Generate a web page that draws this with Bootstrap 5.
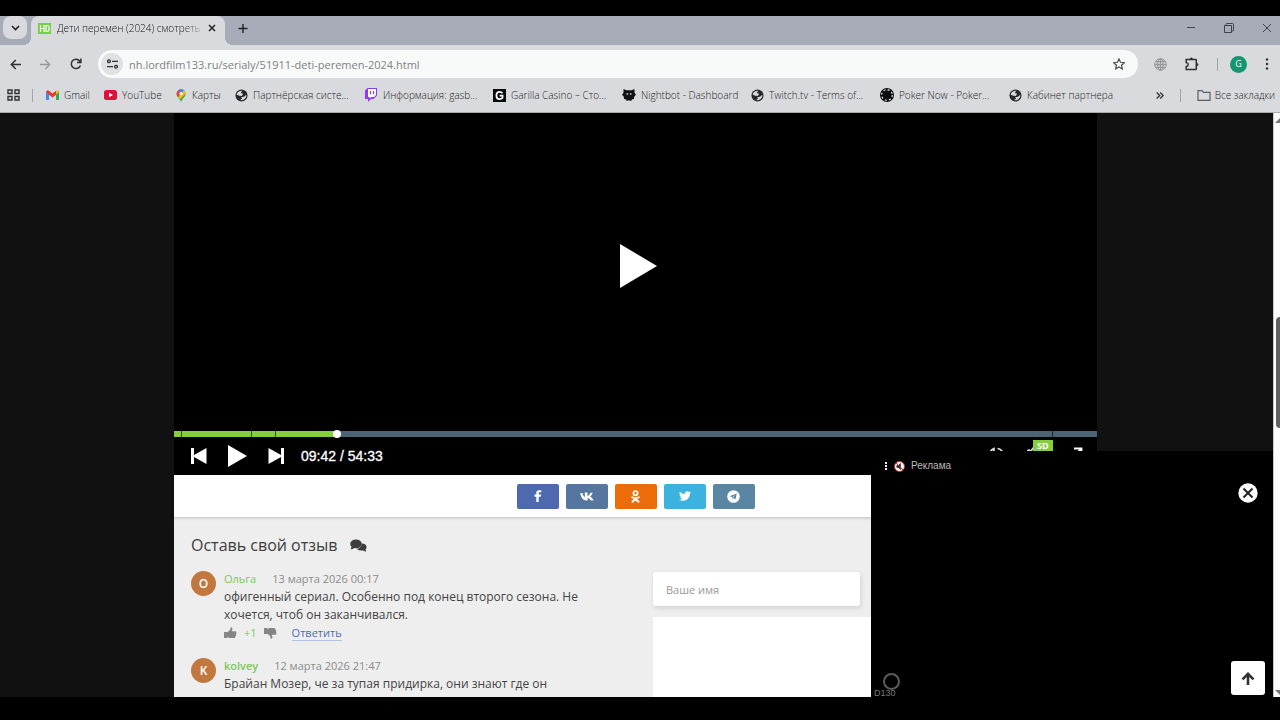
<!DOCTYPE html>
<html lang="ru">
<head>
<meta charset="utf-8">
<meta name="viewport" content="width=device-width, initial-scale=1">
<title>Дети перемен (2024) смотреть</title>
<link href="https://cdn.jsdelivr.net/npm/bootstrap@5.3.0/dist/css/bootstrap.min.css" rel="stylesheet">
<style>
  :root { --chrome: #d9dade; --strip: #a8abb8; --ink: #2f3136; --green: #84cf3b; }
  body { background: #000; font-family: "Open Sans", "Noto Sans", sans-serif; font-size: 13px; line-height: 18px; color: #444; }
  button { border: 0; background: none; padding: 0; color: inherit; font: inherit; display: inline-flex; align-items: center; justify-content: center; }
  svg { display: block; flex: none; }
  a { color: inherit; text-decoration: none; }
  .screen { height: 100vh; padding: 16px 0 23px; }

  .tabstrip { background: var(--strip); height: 29px; color: #222; }
  .tab-search { width: 24px; height: 23px; margin: 0 3px; border-radius: 8px; background: var(--chrome); }
  .tab-active { width: 194px; height: 29px; margin-left: 1px; padding: 0 9px 5px 7px; border-radius: 8px 8px 0 0; background: var(--chrome); position: relative; }
  .tab-active::before, .tab-active::after { content: ""; position: absolute; bottom: 0; width: 8px; height: 8px; }
  .tab-active::before { left: -8px; background: radial-gradient(circle at 0 0, transparent 8px, var(--chrome) 8px); }
  .tab-active::after { right: -8px; background: radial-gradient(circle at 100% 0, transparent 8px, var(--chrome) 8px); }
  .tab-title { font-size: 10px; font-weight: 300; color: #111317; margin-left: 6px; white-space: nowrap; -webkit-mask-image: linear-gradient(90deg, #000 88%, #0004); mask-image: linear-gradient(90deg, #000 88%, #0004); }
  .window-btns { color: #3f414c; gap: 28px; padding-right: 8px; height: 23px; }

  .toolbar { background: var(--chrome); height: 38px; padding: 0 11px 0 10px; color: var(--ink); }
  .nav-btns { gap: 19px; }
  .tool-btns { gap: 18px; padding-left: 16px; }
  .profile-group { gap: 12px; }
  .omnibox { background: #f8f9f9; height: 28px; border-radius: 14px; margin-left: 16px; padding: 0 13px 0 3px; }
  .site-info { width: 22px; height: 22px; border-radius: 50%; background: #dfe1e3; }
  .omnibox input { border: 0; outline: 0; background: none; padding: 1px 0 0 6px; font-size: 11px; color: #7f8286; min-width: 0; }
  .profile { width: 17px; height: 17px; border-radius: 50%; background: #159570; color: #fff; font-size: 9px; }
  .rule { width: 1px; height: 13px; background: #a2a4aa; }

  .bookmarks { background: var(--chrome); height: 30px; padding: 0 5px 5px 7px; font-size: 10px; font-weight: 300; color: #1d1f24; border-bottom: 1px solid #a9aaad; white-space: nowrap; }
  .bookmark-list { display: grid; grid-template-columns: 58px 71px 60px repeat(7, 129px); margin-left: 13px; }
  .bookmark-list a { display: flex; align-items: center; gap: 5px; min-width: 0; }

  .page-view { background: #111; }
  .page-main { padding-right: 2px; }
  .site { max-width: 923px; }
  .player { background: #000; height: 362px; }
  .big-play { padding: 0 0 12px 6px; }
  .seek { height: 6px; background: #4c6373; }
  .seek-done { height: 6px; background: var(--green); position: relative; }
  .seek-knob { position: absolute; right: -4px; top: -1px; width: 8px; height: 8px; border-radius: 50%; background: #fff; }
  .seek-mark { position: absolute; top: 0; width: 1px; height: 6px; background: #2d5212; }
  .controls { height: 38px; padding: 0 12px 0 16px; color: #fff; font-family: "Liberation Sans", Arial, sans-serif; font-size: 14px; -webkit-text-stroke: .3px #fff; }
  .skip-btns { gap: 21px; }
  .view-btns { gap: 23px; }
  .quality { position: relative; }
  .sd { position: absolute; left: 6px; top: -7px; background: var(--green); color: #fff; font: 700 9px/12px "Open Sans", sans-serif; padding: 0 4px; -webkit-text-stroke: 0; }

  .share { background: #fff; height: 42px; gap: 7px; box-shadow: 0 1px 3px #0003; position: relative; }
  .share button { width: 42px; height: 25px; border-radius: 2px; color: #fff; }
  .reviews { background: #eee; padding: 16px 17px; }
  .reviews h2 { font-size: 16px; line-height: 24px; color: #3d3d3d; font-weight: 500; margin: 0 0 13px; gap: 13px; }
  .review-grid { display: grid; grid-template-columns: 390px 1fr; column-gap: 72px; }
  .review { gap: 8px; margin-bottom: 15px; }
  .review p { font-size: 12px; }
  .review-meta { font-size: 11px; color: #8b8b8b; gap: 16px; }
  .votes { gap: 7px; }
  .avatar-disc { width: 25px; height: 25px; border-radius: 50%; background: #c1773d; color: #fff; font-size: 12px; font-weight: 600; margin-top: 1px; flex: none; }
  .author { color: #7cc95a; font-weight: 500; }
  .reply { color: #4a6cb8; border-bottom: 1px solid #b4c2e2; line-height: 15px; margin-left: 8px; }
  .field-name { width: calc(50% - 7px); height: 34px; border: 0; border-radius: 3px; background: #fff; box-shadow: 1px 2px 5px #0000001f; padding: 0 13px; font-size: 11px; margin-top: 2px; }
  .field-name::placeholder { color: #999; opacity: 1; }
  .field-text { border: 0; background: #fff; height: 160px; margin-top: 11px; resize: none; }

  .ad { position: absolute; right: 0; bottom: 0; width: 402px; height: 246px; background: #000; color: #bbb; font: 10px/14px "Liberation Sans", Arial, sans-serif; }
  .ad-head { padding: 8px 0 0 13px; gap: 6px; }
  .ad-close { position: absolute; right: 15px; top: 32px; }
  .ad-ring { position: absolute; left: 12px; bottom: 7px; width: 17px; height: 17px; border: 2px solid #5c5c5c; border-radius: 50%; }
  .ad-code { position: absolute; left: 3px; bottom: -3px; color: #777; font-size: 9px; }
  .to-top { position: absolute; right: 8px; bottom: 2px; width: 34px; height: 34px; border-radius: 3px; background: #fff; color: #333; }
  .scroll-rail { width: 7px; background: #fcfcfc; position: relative; overflow: hidden; border-left: 1px solid #c9c9c9; }
  .scroll-thumb { position: absolute; left: 2px; top: 35%; height: 19%; width: 10px; border-radius: 4px; background: #606060; }
  .rail-up, .rail-down { position: absolute; left: 1px; border: 5px solid transparent; }
  .rail-up { top: 0; border-bottom-color: #777; }
  .rail-down { bottom: -3px; border-top-color: #777; }
</style>
</head>
<body>
<svg width="0" height="0" class="position-absolute" aria-hidden="true">
  <symbol id="globe" viewBox="0 0 14 14"><circle cx="7" cy="7" r="6.500" fill="#26282c"/><path d="M1.800 6.300C2.300 3.600 4.500 1.900 7.800 2L6.200 4.200 8.800 5.200 7.300 7.500 4.800 7.200zM6.500 8.900l3.200-.6L12.200 6.300c.4 2.900-1.600 5.400-4.700 5.800L5.500 11.500l2.300-1.200z" fill="#d9dade"/></symbol>
  <symbol id="thumb" viewBox="0 0 14 13"><path d="M0 5.500h3.200V12H0zM3.200 6l3.400-2.700L7.200.3C8.800 0 9.400 1.400 8.900 3l-.6 1.700h3.900c1.400 0 1.600 1.300.9 1.900.6.600.4 1.500-.3 1.800.4.700.1 1.400-.5 1.600.2 1.100-.3 2-1.600 2H7.200C5.800 12 5 11.300 3.200 11.200z" fill="#858585"/></symbol>
</svg>
<div class="screen d-flex flex-column overflow-hidden">
  <header>
    <div class="tabstrip d-flex align-items-start">
      <button class="tab-search" aria-label="Поиск вкладок"><svg width="9" height="6" viewBox="0 0 9 6"><path d="M1 1l3.500 3.500L8 1" fill="none" stroke="currentColor" stroke-width="1.600"/></svg></button>
      <div class="tab-active d-flex align-items-center">
        <svg width="13" height="11" viewBox="0 0 13 11"><path d="M0 0h13v11H0z" fill="#74d044"/><path d="M2.500 2v7M6 2v7M2.500 5.500H6M8 2.500v6h1q2.200 0 2.200-3t-2.200-3z" fill="none" stroke="#fff" stroke-width="1.200"/></svg>
        <span class="tab-title">Дети перемен (2024) смотреть</span>
        <button class="ms-auto" aria-label="Закрыть вкладку"><svg width="8" height="8" viewBox="0 0 8 8"><path d="M1 1l6 6M7 1L1 7" stroke="#222" stroke-width="1.500"/></svg></button>
      </div>
      <button class="ms-2 ps-1 pt-2" aria-label="Новая вкладка"><svg width="11" height="9" viewBox="0 0 11 9"><path d="M6 0v9M1.500 4.500h9" stroke="currentColor" stroke-width="1.400"/></svg></button>
      <div class="window-btns d-flex align-items-center ms-auto">
        <button aria-label="Свернуть"><svg width="10" height="10" viewBox="0 0 10 10"><path d="M1 4.500h8" stroke="currentColor"/></svg></button>
        <button aria-label="Развернуть"><svg width="10" height="10" viewBox="0 0 10 10"><path d="M.5 2.500h7v7h-7zM2 2.500v-1q0-1 1-1h5.500q1 0 1 1V7q0 1-1 1h-1" fill="none" stroke="currentColor"/></svg></button>
        <button aria-label="Закрыть"><svg width="10" height="10" viewBox="0 0 10 10"><path d="M1 1l8 8M9 1L1 9" stroke="currentColor"/></svg></button>
      </div>
    </div>

    <div class="toolbar d-flex align-items-center">
      <div class="nav-btns d-flex">
        <button aria-label="Назад"><svg width="11" height="11" viewBox="0 0 11 11"><path d="M11 5.500H1.500M5.800 1L1.300 5.500 5.800 10" fill="none" stroke="currentColor" stroke-width="1.500"/></svg></button>
        <button aria-label="Вперёд"><svg width="11" height="11" viewBox="0 0 11 11"><path d="M0 5.500h9.500M5.200 1l4.500 4.500L5.200 10" fill="none" stroke="#96989d" stroke-width="1.400"/></svg></button>
        <button aria-label="Обновить"><svg width="12" height="12" viewBox="0 0 12 12"><path d="M10.400 7.500A4.700 4.700 0 1 1 9.700 3L10.700 4.300M10.900.5v4H7" fill="none" stroke="currentColor" stroke-width="1.500"/></svg></button>
      </div>
      <div class="omnibox d-flex align-items-center flex-grow-1">
        <button class="site-info" aria-label="Сведения о сайте"><svg width="11" height="10" viewBox="0 0 11 10"><g fill="none" stroke="#333" stroke-width="1.300"><circle cx="2" cy="2.300" r="1.400"/><path d="M5 2.300h6M0 7.700h6"/><circle cx="9" cy="7.700" r="1.400"/></g></svg></button>
        <input class="flex-grow-1" type="text" aria-label="Адрес" value="nh.lordfilm133.ru/serialy/51911-deti-peremen-2024.html">
        <button aria-label="Добавить в закладки"><svg width="12" height="12" viewBox="0 0 12 12"><path d="M6 .9l1.500 3.400 3.800.4-2.800 2.500.8 3.700L6 9l-3.300 1.900.8-3.700L.7 4.700l3.800-.4z" fill="none" stroke="#4a4c50" stroke-width="1.200"/></svg></button>
      </div>
      <div class="tool-btns d-flex align-items-center">
        <button aria-label="Язык"><svg width="13" height="13" viewBox="0 0 13 13"><g fill="#c8c9cb" stroke="#97999c"><circle cx="6.500" cy="6.500" r="5.800"/><ellipse cx="6.500" cy="6.500" rx="2.700" ry="5.800"/><path d="M6.500.7v11.600M.7 6.500h11.600M1.600 3.500h9.800M1.600 9.500h9.800"/></g></svg></button>
        <button aria-label="Расширения"><svg width="14" height="14" viewBox="0 0 14 14"><path d="M1.200 2.500h9.600q.5 0 .5.500v9q0 .5-.5.500H1.200V9.600q2-.3 2-2.100t-2-2.100z" fill="none" stroke="currentColor" stroke-width="1.500"/><path d="M4.700 2a1.600 1.600 0 0 1 3.200 0zM11.800 5.900a1.600 1.600 0 0 1 0 3.200z" fill="currentColor"/></svg></button>
        <div class="profile-group d-flex align-items-center"><span class="rule"></span>
        <button class="profile" aria-label="Профиль">G</button></div>
        <button aria-label="Меню"><svg width="4" height="12" viewBox="0 0 4 12"><g fill="currentColor"><circle cx="2" cy="1.500" r="1.200"/><circle cx="2" cy="6" r="1.200"/><circle cx="2" cy="10.500" r="1.200"/></g></svg></button>
      </div>
    </div>

    <nav class="bookmarks d-flex align-items-center">
      <button class="me-1" aria-label="Приложения"><svg width="13" height="12" viewBox="0 0 13 12"><path d="M1 1h4v3.500H1zM8 1h4v3.500H8zM1 7.500h4V11H1zM8 7.500h4V11H8z" fill="none" stroke="#2f3136" stroke-width="1.400"/></svg></button>
      <span class="rule ms-2"></span>
      <div class="bookmark-list">
        <a href="#"><svg width="13" height="10" viewBox="0 0 13 10"><path d="M0 1.500V10h3V4z" fill="#4285f4"/><path d="M13 1.500V10h-3V4z" fill="#34a853"/><path d="M0 1.800Q1-.5 3 .7l3.500 2.800L10 .7v4L6.500 7.500 3 4.700z" fill="#e33b2e"/><path d="M10 .7q2-1.200 3 1.100L10 4.700z" fill="#fbbc04"/></svg><span>Gmail</span></a>
        <a href="#"><svg width="13" height="10" viewBox="0 0 13 10"><rect width="13" height="10" rx="2.500" fill="#e0103c"/><path d="M5 2.800v4.400L9 5z" fill="#fff"/></svg><span>YouTube</span></a>
        <a href="#"><svg width="12" height="13" viewBox="0 0 12 13"><path d="M6 13C5.500 10 1.500 8 1.500 4.500L9.300 1.500C12 5 10 7.500 8 9.500Q6.600 11 6 13" fill="#34a853"/><path d="M1.500 4.800Q1.500 2 3.700.7L7 3.500 3 8.200Q1.500 6.300 1.500 4.800" fill="#e94335"/><path d="M3.500.8Q6.500-.9 9.300 1.500L6 4.500z" fill="#4285f4"/><path d="M3 8.200l6-6.900Q10.600 2.800 10.500 4.700L5.200 10.200z" fill="#fbbc04"/><circle cx="6" cy="4.500" r="1.600" fill="#fff"/></svg><span>Карты</span></a>
        <a href="#"><svg width="13" height="13"><use href="#globe"/></svg><span>Партнёрская систе...</span></a>
        <a href="#"><svg width="14" height="14" viewBox="0 0 14 14"><path d="M3.500 0H13v7.500L9.500 11H7l-3 3v-3H1V2.500z" fill="#8c3df2"/><path d="M4 1h8v6L10 9H7.500L5.700 10.800V9H4z" fill="#fff"/><path d="M6.500 3v3.200M9.500 3v3.200" stroke="#8c3df2" stroke-width="1.200"/></svg><span>Информация: gasb...</span></a>
        <a href="#"><svg width="13" height="13" viewBox="0 0 13 13"><path d="M0 0h13v13H0z" fill="#08090d"/><path d="M9.500 4.200Q8.500 2.900 6.500 2.900 3.400 2.900 3.400 6.500t3.200 3.600Q8.500 10.100 9.500 9V6.700H6.600" fill="none" stroke="#fff" stroke-width="1.800"/></svg><span>Garilla Casino – Сто...</span></a>
        <a href="#"><svg width="14" height="14" viewBox="0 0 14 14"><path d="M1.500 1l3 1.200h5l3-1.200v3.500L14 7l-1.500 1-.7 3-2 .5-.5 1.500-2.300-.7-2.300.7-.5-1.500-2-.5-.7-3L0 7l1.500-2.500z" fill="#111216"/><path d="M4.500 5h1.600v2H4.700zM7.900 5h1.600l-.2 2H7.900z" fill="#a5a6ab"/></svg><span>Nightbot - Dashboard</span></a>
        <a href="#"><svg width="13" height="13"><use href="#globe"/></svg><span>Twitch.tv - Terms of...</span></a>
        <a href="#"><svg width="14" height="14" viewBox="0 0 14 14"><circle cx="7" cy="7" r="7" fill="#0c0c0e"/><circle cx="7" cy="7" r="5.300" fill="none" stroke="#d5d6da" stroke-width="1.300" stroke-dasharray="2 2.160"/><circle cx="7" cy="7" r="4.200" fill="#0c0c0e"/></svg><span>Poker Now - Poker...</span></a>
        <a href="#"><svg width="13" height="13"><use href="#globe"/></svg><span>Кабинет партнера</span></a>
      </div>
      <div class="d-flex align-items-center ms-auto gap-3">
        <button aria-label="Ещё закладки"><svg width="8" height="7" viewBox="0 0 8 7"><path d="M.7.500l3 3-3 3M4.200.5l3 3-3 3" fill="none" stroke="#2f3136" stroke-width="1.300"/></svg></button>
        <span class="rule"></span>
        <a href="#" class="d-flex align-items-center gap-1"><svg width="14" height="11" viewBox="0 0 14 11"><path d="M1 .7h4l1.500 1.600H13v8H1z" fill="none" stroke="#5c5e63" stroke-width="1.200"/></svg>Все закладки</a>
      </div>
    </nav>
  </header>

  <div class="page-view d-flex flex-grow-1 overflow-hidden">
    <main class="page-main flex-grow-1 position-relative overflow-hidden">
      <div class="site mx-auto">
        <section class="player d-flex flex-column">
          <button class="big-play flex-grow-1 w-100" aria-label="Смотреть"><svg width="37" height="44" viewBox="0 0 37 44"><path d="M0 0v44l37-22z" fill="#fff"/></svg></button>
          <div class="seek position-relative">
            <div class="seek-done" style="width:17.700%"><span class="seek-mark" style="left:4.500%"></span><span class="seek-mark" style="left:47%"></span><span class="seek-mark" style="left:62%"></span><span class="seek-knob"></span></div>
            <span class="seek-mark bg-dark" style="left:95.100%"></span>
          </div>
          <div class="controls d-flex align-items-center">
            <div class="skip-btns d-flex align-items-center">
              <button aria-label="Предыдущая"><svg width="17" height="16" viewBox="0 0 17 16"><path d="M1 0h3v7L16.500 0v16L4 9v7H1z" fill="#fff"/></svg></button>
              <button aria-label="Играть"><svg width="19" height="22" viewBox="0 0 19 22"><path d="M0 0v22l19-11z" fill="#fff"/></svg></button>
              <button aria-label="Следующая"><svg width="17" height="16" viewBox="0 0 17 16"><path d="M16 0h-3v7L.5 0v16L13 9v7h3z" fill="#fff"/></svg></button>
            </div>
            <span class="ms-3">09:42 / 54:33</span>
            <div class="view-btns d-flex align-items-center ms-auto">
              <button aria-label="Скорость"><svg width="16" height="18" viewBox="0 0 16 18"><path d="M2 6Q3 2.500 6 1.500V5M9.500 1.500Q13.500 2 15 6" fill="none" stroke="#ddd" stroke-width="1.700"/></svg></button>
              <button class="quality" aria-label="Качество"><svg width="20" height="18" viewBox="0 0 20 18"><path d="M0 4l2-1 1.500 1.500L7 0" fill="none" stroke="#ddd" stroke-width="1.700"/></svg><span class="sd">SD</span></button>
              <button aria-label="На весь экран"><svg width="15" height="18" viewBox="0 0 15 18"><path d="M4 1.500h7.500V9M11 2L4 9" fill="none" stroke="#fff" stroke-width="1.800"/></svg></button>
            </div>
          </div>
        </section>

        <div class="share d-flex align-items-center justify-content-center">
          <button style="background:#4e69ad" aria-label="Facebook"><svg width="8" height="12" viewBox="0 0 8 12"><path d="M2.300 12V6.700H.5V4.500h1.800V3Q2.300.3 5 .2h2.300v2H5.800Q4.700 2.200 4.700 3.200v1.300h2.500l-.4 2.200H4.700V12z" fill="#fff"/></svg></button>
          <button style="background:#56759f" aria-label="ВКонтакте"><svg width="14" height="9" viewBox="0 0 14 9"><path d="M6.300 8.500C3 8.500 1 5.500.2 1h2.300c.5 2 1.300 3.700 2.400 4.100V1.600L4.300.5h3.200v3.800C8.500 4 9.700 2.300 10.300.8h2.400c-.5 1.700-1.600 3-2.500 3.700 1 .6 2.300 2 3.500 4h-2.900C10 7.200 8.700 6.200 7.600 6v2.500z" fill="#fff"/></svg></button>
          <button style="background:#ed6c0a" aria-label="Одноклассники"><svg width="9" height="13" viewBox="0 0 9 13"><circle cx="4.500" cy="3.200" r="2.100" fill="none" stroke="#fff" stroke-width="1.800"/><path d="M1.200 7.300Q4.500 9.300 7.800 7.300M4.500 8.500l-3 3.300M4.500 8.500l3 3.300" fill="none" stroke="#fff" stroke-width="1.900" stroke-linecap="round"/></svg></button>
          <button style="background:#3cb3df" aria-label="Twitter"><svg width="12" height="10" viewBox="0 0 12 10"><path d="M.8.7Q3 3 5.900 3.100C5.500.5 8.400-.8 10.100 1L11.700.5 10.700 1.900 12 1.600 10.800 2.900C10.800 8 5.500 11.500 0 8.700Q2 8.800 3.500 7.700 1.700 7.500 1.200 6h1.100Q.5 5.300.4 3.500l1 .3Q0 2.500.8.7" fill="#fff"/></svg></button>
          <button style="background:#5b86a3" aria-label="Telegram"><svg width="13" height="13" viewBox="0 0 13 13"><circle cx="6.500" cy="6.500" r="6.300" fill="#fff"/><path d="M2.500 6.300l7.200-2.900-1.200 6.100-2-1.400-1 1-.3-2z" fill="#5b86a3"/><path d="M5.200 7.200l3-2.300-2.400 2.800" fill="#fff"/></svg></button>
        </div>

        <section class="reviews">
          <h2 class="d-flex align-items-center">Оставь свой отзыв
            <svg width="17" height="13" viewBox="0 0 17 13"><path d="M11.700 4.500q4.900.4 4.900 3.600 0 1.500-1.200 2.500l1 2Q14.500 12.700 13 11.500 8.500 12 6.800 9.700q4.700-.6 4.900-5.200" fill="#3d3d3d"/><ellipse cx="6" cy="4.900" rx="5.800" ry="4.300" fill="#3d3d3d"/><path d="M1.800 7.500L.5 10.300Q3 10.300 4.500 8.800z" fill="#3d3d3d"/></svg></h2>
          <div class="review-grid">
            <div>
              <article class="review d-flex">
                <div class="avatar-disc d-flex align-items-center justify-content-center">О</div>
                <div>
                  <div class="review-meta d-flex"><span class="author">Ольга</span><time>13 марта 2026 00:17</time></div>
                  <p class="mb-0">офигенный сериал. Особенно под конец второго сезона. Не хочется, чтоб он заканчивался.</p>
                  <div class="review-meta votes d-flex align-items-center">
                    <button aria-label="Нравится"><svg width="13" height="12"><use href="#thumb"/></svg></button>
                    <span class="author">+1</span>
                    <button aria-label="Не нравится"><svg width="13" height="12" viewBox="0 0 14 13"><g transform="translate(0 13) scale(1 -1)"><path d="M0 5.500h3.200V12H0zM3.200 6l3.400-2.700L7.200.3C8.800 0 9.400 1.400 8.900 3l-.6 1.700h3.900c1.400 0 1.600 1.300.9 1.900.6.600.4 1.500-.3 1.800.4.700.1 1.400-.5 1.600.2 1.100-.3 2-1.600 2H7.200C5.800 12 5 11.300 3.200 11.200z" fill="#858585"/></g></svg></button>
                    <a class="reply" href="#">Ответить</a>
                  </div>
                </div>
              </article>
              <article class="review d-flex">
                <div class="avatar-disc d-flex align-items-center justify-content-center">K</div>
                <div>
                  <div class="review-meta d-flex"><span class="author fw-semibold">kolvey</span><time>12 марта 2026 21:47</time></div>
                  <p class="mb-0">Брайан Мозер, че за тупая придирка, они знают где он</p>
                </div>
              </article>
            </div>
            <form>
              <input class="field-name d-block" type="text" placeholder="Ваше имя" aria-label="Ваше имя">
              <textarea class="field-text d-block w-100" aria-label="Отзыв"></textarea>
            </form>
          </div>
        </section>
      </div>

      <aside class="ad">
        <div class="ad-head d-flex align-items-center">
          <svg width="4" height="10" viewBox="0 0 4 10"><path d="M1 1h2v2H1zM1 4h2v2H1zM1 7h2v2H1z" fill="#eee"/></svg>
          <button aria-label="Включить звук"><svg width="11" height="11" viewBox="0 0 11 11"><circle cx="5.500" cy="5.500" r="5" fill="#fff" stroke="#c62828"/><path d="M2.500 4.300h1.800L6.800 2v7L4.300 6.800H2.500z" fill="#222"/><path d="M2 2l7 7" stroke="#c62828"/></svg></button>
          <span>Реклама</span>
        </div>
        <button class="ad-close" aria-label="Закрыть рекламу"><svg width="20" height="20" viewBox="0 0 20 20"><circle cx="10" cy="10" r="9.700" fill="#fff"/><path d="M5.500 5.500l9 9M14.500 5.500l-9 9" stroke="#222" stroke-width="2"/></svg></button>
        <span class="ad-ring"></span>
        <span class="ad-code">D130</span>
        <button class="to-top" aria-label="Наверх"><svg width="14" height="13" viewBox="0 0 14 13"><path d="M7 13V2M1.500 7.300L7 1.800l5.500 5.500" fill="none" stroke="currentColor" stroke-width="2.600"/></svg></button>
      </aside>
    </main>
    <div class="scroll-rail"><span class="rail-up"></span><span class="scroll-thumb"></span><span class="rail-down"></span></div>
  </div>
</div>
<script src="https://cdn.jsdelivr.net/npm/bootstrap@5.3.0/dist/js/bootstrap.bundle.min.js"></script>
</body>
</html>
